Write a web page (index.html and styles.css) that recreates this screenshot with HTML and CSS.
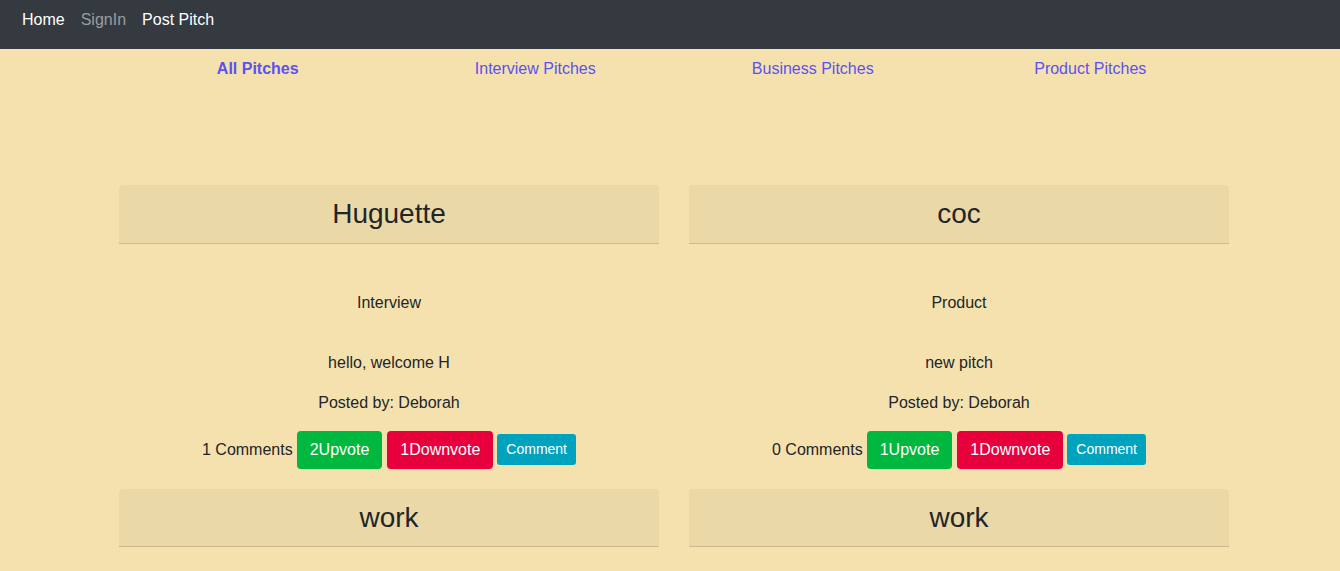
FILE: index.html
```html
<!DOCTYPE html>
<html>
<head>
<meta charset="utf-8">
<link rel="stylesheet" href="styles.css">
</head>
<body>
<nav class="topbar">
  <a class="nav-link active" href="#">Home</a>
  <a class="nav-link muted" href="#">SignIn</a>
  <a class="nav-link active" href="#">Post Pitch</a>
</nav>
<main class="page">
  <div class="cats">
    <a class="cat bold" href="#">All Pitches</a>
    <a class="cat" href="#">Interview Pitches</a>
    <a class="cat" href="#">Business Pitches</a>
    <a class="cat" href="#">Product Pitches</a>
  </div>
  <div class="grid">
    <div class="card">
      <div class="card-header"><h3>Huguette</h3></div>
      <div class="card-body">
        <p class="category">Interview</p>
        <p class="content">hello, welcome H</p>
        <p class="author">Posted by: Deborah</p>
        <div class="actions">
          <span class="count">1 Comments</span>
          <a class="btn btn-success" href="#">2Upvote</a>
          <a class="btn btn-danger" href="#">1Downvote</a>
          <a class="btn btn-info btn-sm" href="#">Comment</a>
        </div>
      </div>
    </div>
    <div class="card">
      <div class="card-header"><h3>coc</h3></div>
      <div class="card-body">
        <p class="category">Product</p>
        <p class="content">new pitch</p>
        <p class="author">Posted by: Deborah</p>
        <div class="actions">
          <span class="count">0 Comments</span>
          <a class="btn btn-success" href="#">1Upvote</a>
          <a class="btn btn-danger" href="#">1Downvote</a>
          <a class="btn btn-info btn-sm" href="#">Comment</a>
        </div>
      </div>
    </div>
    <div class="card">
      <div class="card-header"><h3>work</h3></div>
    </div>
    <div class="card">
      <div class="card-header"><h3>work</h3></div>
    </div>
  </div>
</main>
</body>
</html>
```

FILE: styles.css
```css
* { box-sizing: border-box; }
html, body { margin: 0; padding: 0; }
body {
  background: #f5e1ae;
  font-family: "Liberation Sans", Arial, sans-serif;
  font-size: 16px;
  line-height: 1.5;
  color: #212529;
  height: 571px;
  overflow: hidden;
}
.topbar {
  background: #343a40;
  height: 49px;
  display: flex;
  align-items: flex-start;
  padding: 8px 0 0 14px;
}
.nav-link {
  text-decoration: none;
  padding: 0 8px;
  line-height: 24px;
}
.nav-link.active { color: #fff; }
.nav-link.muted { color: rgba(255,255,255,.5); }
.page {
  width: 1110px;
  margin: 0 0 0 119px;
}
.cats {
  display: grid;
  grid-template-columns: repeat(4, 1fr);
  text-align: center;
  padding-top: 8px;
  height: 136px;
}
.cat {
  color: #5a52f2;
  text-decoration: none;
  line-height: 24px;
}
.cat.bold { font-weight: bold; }
.grid {
  display: grid;
  grid-template-columns: 540px 540px;
  column-gap: 30px;
  row-gap: 20px;
}
.card-header {
  background: rgba(0,0,0,.04);
  border-bottom: 1px solid rgba(0,0,0,.14);
  border-radius: 4px 4px 0 0;
  padding: 12px 20px;
  text-align: center;
}
.card-header h3 {
  margin: 0;
  font-size: 28px;
  font-weight: 500;
  line-height: 1.2;
}
.card-body {
  text-align: center;
  padding-top: 47px;
}
.card-body p { margin: 0; }
.category { margin-bottom: 36px !important; }
.content { margin-bottom: 16px !important; }
.author { margin-bottom: 16px !important; }
.actions {
  display: flex;
  justify-content: center;
  align-items: center;
  gap: 5px;
}
.count { margin-right: -1px; }
.btn {
  display: inline-block;
  text-decoration: none;
  color: #fff;
  border-radius: 4px;
  padding: 7px 13px;
  font-size: 16px;
  line-height: 24px;
}
.btn-success { background: #00b83f; }
.btn-danger { background: #e8003d; }
.btn-info { background: #00a3bd; }
.btn-sm {
  font-size: 14px;
  line-height: 21px;
  padding: 5px 9px;
  border-radius: 3px;
  margin-left: -1px;
}
```
